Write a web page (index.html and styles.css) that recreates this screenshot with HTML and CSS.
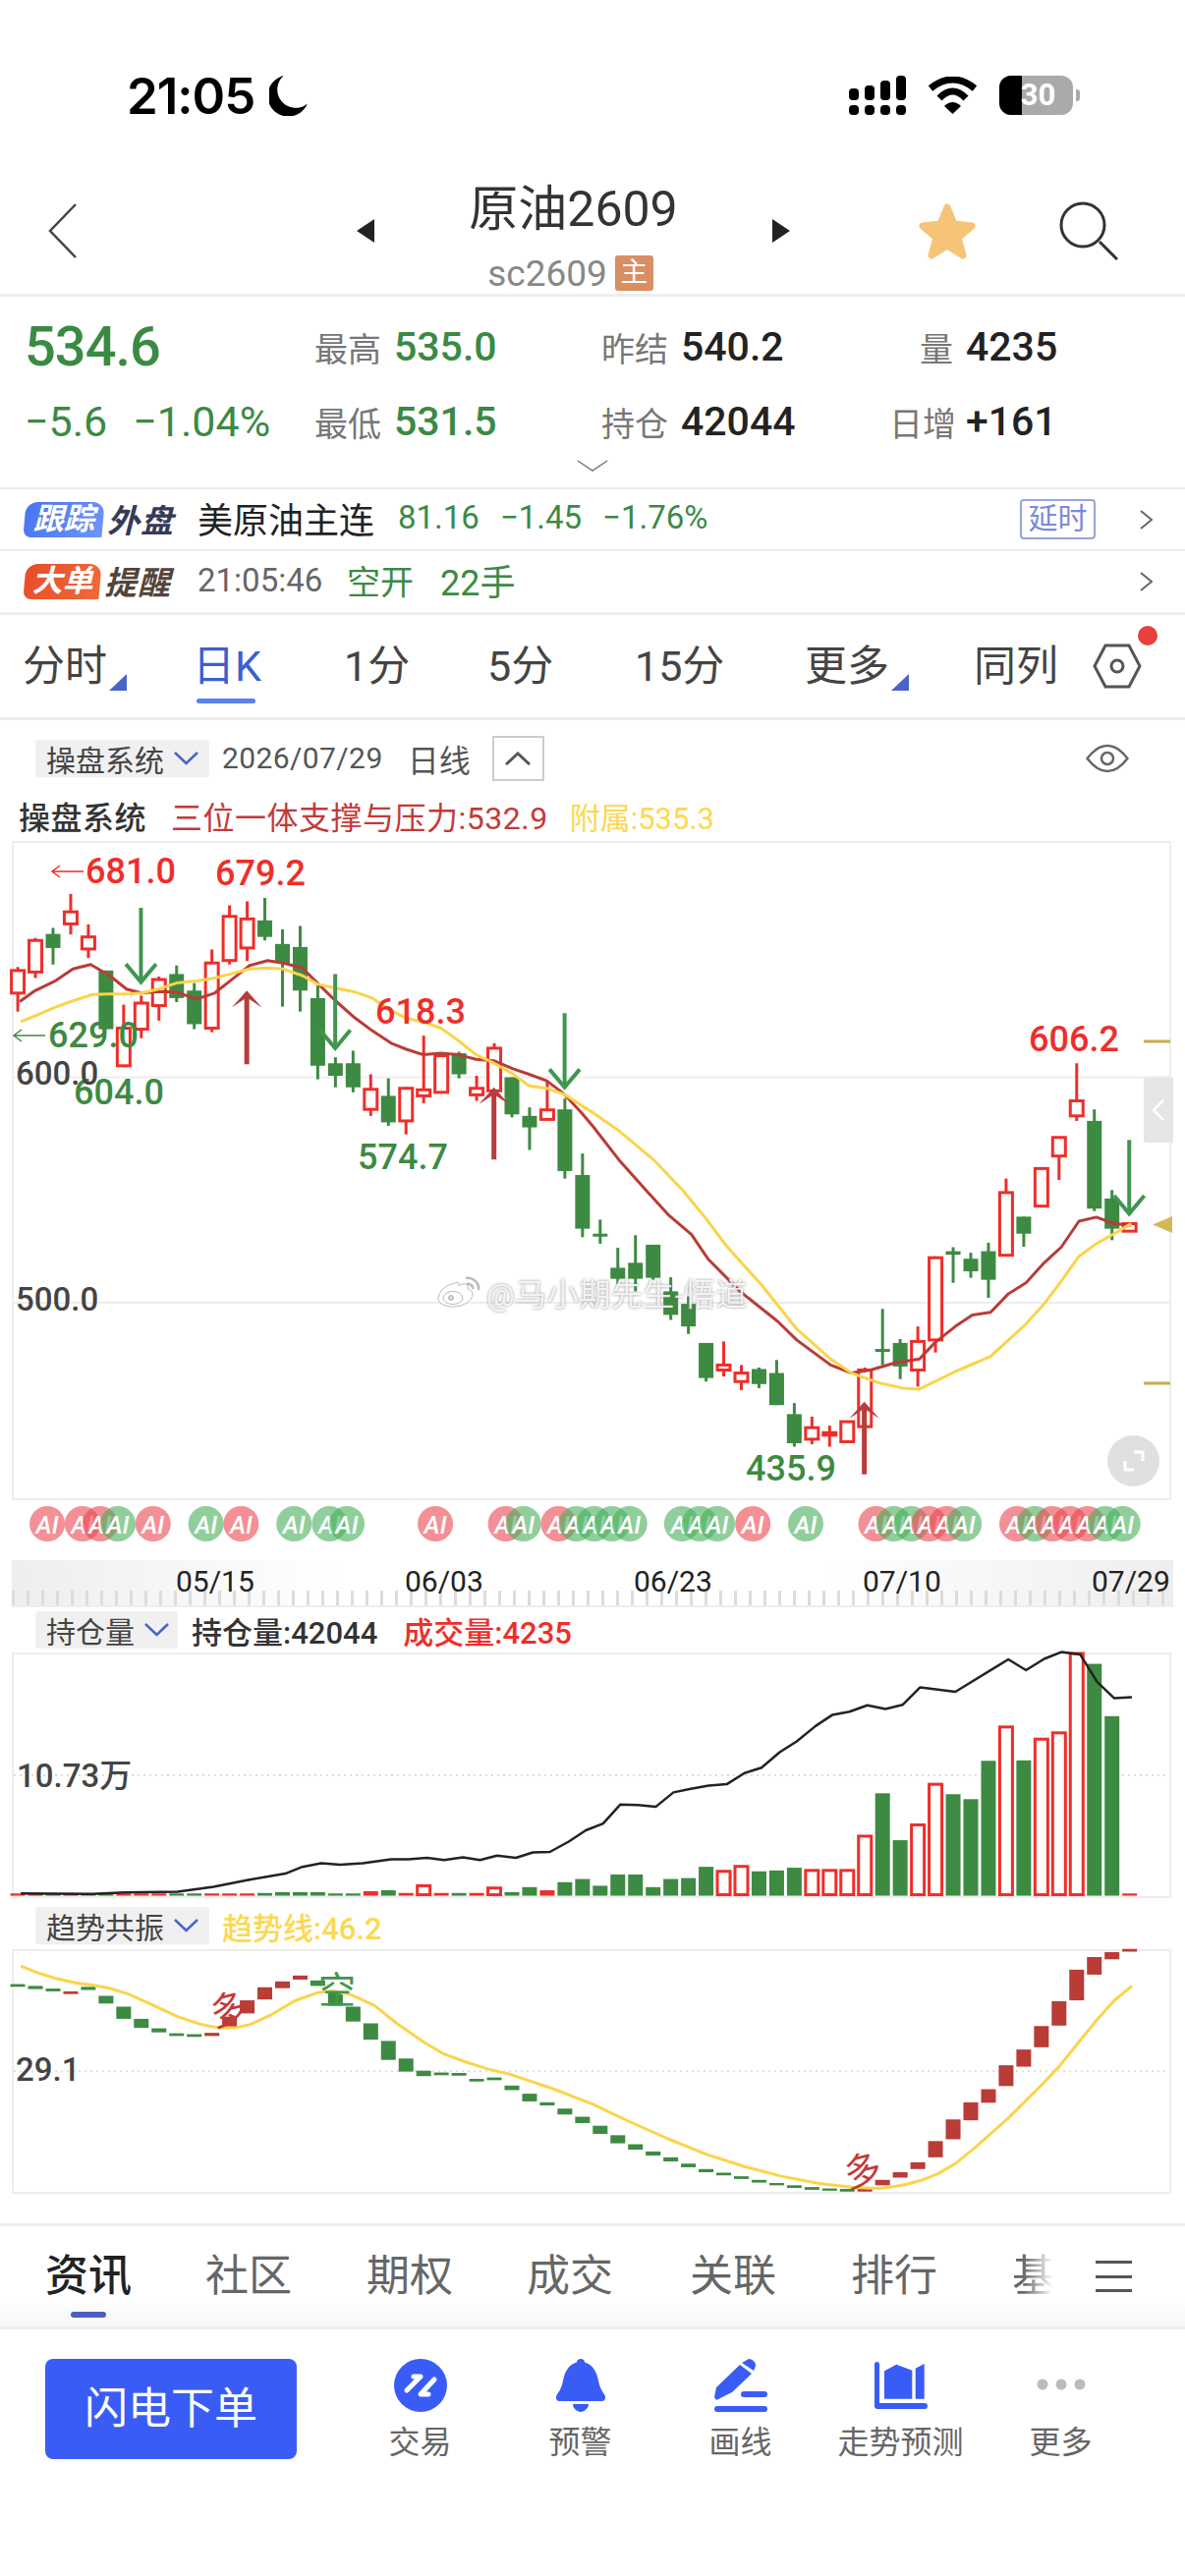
FILE: index.html
```html
<!DOCTYPE html>
<html lang="zh">
<head>
    <meta charset="UTF-8" />
    <title>原油2609</title>
    <link rel="stylesheet" href="styles.css">
</head>
<body>
<div class="status">
    <span class="clock">21:05</span>
    <svg class="moon" viewBox="0 0 38 40"><path d="M14 1A20 20 0 1 0 37 28 17 17 0 0 1 14 1z"/></svg>
    <svg class="signal" viewBox="0 0 58 40">
        <rect x="0" y="13" width="10" height="12" rx="4"/><rect x="0" y="30" width="10" height="10" rx="4"/>
        <rect x="16" y="10" width="10" height="15" rx="4"/><rect x="16" y="30" width="10" height="10" rx="4"/>
        <rect x="32" y="5" width="10" height="20" rx="4"/><rect x="32" y="30" width="10" height="10" rx="4"/>
        <rect x="48" y="0" width="10" height="25" rx="4"/><rect x="48" y="30" width="10" height="10" rx="4"/>
    </svg>
    <svg class="wifi" viewBox="0 0 51 38">
        <path d="M25.500 38 17 30Q25.500 22 34 30z"/>
        <path class="arc" d="M12 22Q25.500 8 39 22M3 12Q25.500-6 48 12"/>
    </svg>
    <div class="battery"><span class="battery-fill"></span><b>30</b></div>
    <span class="battery-nub"></span>
</div>

<div class="nav">
    <svg class="back" viewBox="0 0 30 56"><polyline points="28,1 2,28 28,55"/></svg>
    <span class="tri tri-left"></span>
    <div class="title-box">
        <div class="title">原油2609</div>
        <div class="subtitle">sc2609<span class="main-tag">主</span></div>
    </div>
    <span class="tri tri-right"></span>
    <svg class="star" viewBox="0 0 60 60"><path d="M30 6 37 23 55 25 41 37 46 55 30 45 14 55 19 37 5 25 23 23z"/></svg>
    <svg class="search" viewBox="0 0 60 60"><circle cx="24" cy="24" r="22"/><line x1="41" y1="41" x2="59" y2="59"/></svg>
</div>

<div class="quote">
    <div class="quote-grid">
        <div class="price">534.6</div>
        <div class="stat"><label>最高</label><span class="up">535.0</span></div>
        <div class="stat"><label>昨结</label><span>540.2</span></div>
        <div class="stat stat-end"><label>量</label><span>4235</span></div>
        <div class="change"><span>−5.6</span><span>−1.04%</span></div>
        <div class="stat"><label>最低</label><span class="up">531.5</span></div>
        <div class="stat"><label>持仓</label><span>42044</span></div>
        <div class="stat stat-end"><label>日增</label><span>+161</span></div>
    </div>
    <svg class="more-down" viewBox="0 0 32 12"><polyline points="1,1 16,11 31,1"/></svg>
</div>

<div class="info-row">
    <span class="badge badge-blue">跟踪</span><span class="badge-word word-navy">外盘</span>
    <span class="info-name">美原油主连</span>
    <span class="info-num">81.16</span><span class="info-num">−1.45</span><span class="info-num">−1.76%</span>
    <span class="delay">延时</span>
    <svg class="chev" viewBox="0 0 13 20"><polyline points="1,1 12,10 1,19"/></svg>
</div>
<div class="info-row info-row-end">
    <span class="badge badge-orange">大单</span><span class="badge-word word-brown">提醒</span>
    <span class="info-time">21:05:46</span>
    <span class="info-green">空开</span><span class="info-green info-hand">22手</span>
    <svg class="chev chev-auto" viewBox="0 0 13 20"><polyline points="1,1 12,10 1,19"/></svg>
</div>

<div class="tabs">
    <span class="tab tab-mark">分时</span>
    <span class="tab tab-on">日K</span>
    <span class="tab">1分</span>
    <span class="tab">5分</span>
    <span class="tab">15分</span>
    <span class="tab tab-mark">更多</span>
    <span class="tab">同列</span>
    <span class="hex-wrap">
        <svg class="hex" viewBox="0 0 50 46"><polygon points="13,2 37,2 48,23 37,44 13,44 2,23"/><circle cx="25" cy="23" r="6"/></svg>
        <i class="dot"></i>
    </span>
</div>

<div class="chart-head">
    <div class="chip chip-wide">操盘系统<svg class="chip-arrow" viewBox="0 0 25 14"><polyline points="1,1 12.500,12 24,1"/></svg></div>
    <span class="date">2026/07/29</span>
    <span class="period">日线</span>
    <span class="fold"><svg viewBox="0 0 26 14"><polyline points="1,13 13,2 25,13"/></svg></span>
    <svg class="eye" viewBox="0 0 44 30"><path d="M1.500 15C10 4 16 2 22 2s12 2 20.500 13C34 26 28 28 22 28S10 26 1.500 15z"/><circle cx="22" cy="15" r="6"/></svg>
</div>
<div class="legend">
    <span class="legend-name">操盘系统</span>
    <span class="legend-red">三位一体支撑与压力:532.9</span>
    <span class="legend-yellow">附属:535.3</span>
</div>

<div class="panel panel-main">
    <svg id="mainChart"></svg>
    <div class="watermark">
        <svg viewBox="0 0 44 32">
            <path d="M18 7C8 9 1 16 1 23c0 5 8 8 15 8 11 0 20-6 20-13 0-3-3-4-5-5 1-3 0-6-5-5-3 1-5 2-4 0 0-2-1-2-4-1z"/>
            <ellipse class="wm-hole" cx="16" cy="22" rx="10" ry="6.500"/>
            <circle class="wm-eye" cx="14" cy="22" r="2.500"/>
            <path class="wm-arc" d="M29 2c7-1 14 4 13 12M30 8c3-1 7 2 6 5"/>
        </svg>
        <span>@马小期先生-悟道</span>
    </div>
    <div class="side-tab"><svg viewBox="0 0 12 22"><polyline points="11,1 1,11 11,21"/></svg></div>
    <div class="zoom-btn"><svg viewBox="0 0 24 24"><path d="M12 3h9v9M12 21H3v-9"/></svg></div>
</div>

<svg id="aiRow" class="ai-row"></svg>

<div class="axis">
    <span>05/15</span><span>06/03</span><span>06/23</span><span>07/10</span><span>07/29</span>
</div>

<div class="sub-head sub-head-vol">
    <div class="chip chip-vol">持仓量<svg class="chip-arrow" viewBox="0 0 25 14"><polyline points="1,1 12.500,12 24,1"/></svg></div>
    <span class="vol-a">持仓量:42044</span>
    <span class="vol-b">成交量:4235</span>
</div>
<div class="panel panel-vol"><svg id="volChart"></svg></div>

<div class="sub-head sub-head-trend">
    <div class="chip chip-wide">趋势共振<svg class="chip-arrow" viewBox="0 0 25 14"><polyline points="1,1 12.500,12 24,1"/></svg></div>
    <span class="trend-val">趋势线:46.2</span>
</div>
<div class="panel panel-trend"><svg id="trendChart"></svg></div>

<div class="news-tabs">
    <span class="news-tab news-on">资讯</span>
    <span class="news-tab">社区</span>
    <span class="news-tab">期权</span>
    <span class="news-tab">成交</span>
    <span class="news-tab">关联</span>
    <span class="news-tab">排行</span>
    <span class="news-tab news-fade">基</span>
    <span class="menu"><i></i><i></i><i></i></span>
</div>

<div class="toolbar">
    <div class="order-btn">闪电下单</div>
    <div class="tool">
        <svg viewBox="0 0 54 54"><circle class="fill" cx="27" cy="27" r="27"/><path class="mark" d="M20 18H27L13 32M41 21 27 36H35"/></svg>
        <span>交易</span>
    </div>
    <div class="tool">
        <svg viewBox="0 0 50 54"><path class="fill" d="M25 0c2.500 0 4 1.500 4 3.500C37 6 41 12 43 22c1 6 3 10 6 14 2 3 1 7-2 7H3c-3 0-4-4-2-7 3-4 5-8 6-14C9 12 13 6 21 3.500 21 1.500 22.500 0 25 0zM17 46h16c0 4-4 8-8 8s-8-4-8-8z"/></svg>
        <span>预警</span>
    </div>
    <div class="tool">
        <svg viewBox="0 0 54 54"><path class="fill" d="M28 4 35 0c3 0 7 3 7 6 0 2-1 4-2 6zM26 6 38 15 18 34 2 42 0 39 2 29zM30 33H51a3 3 0 0 1 0 6H30a3 3 0 0 1 0-6zM3 48H51a3 3 0 0 1 0 6H3a3 3 0 0 1 0-6z"/></svg>
        <span>画线</span>
    </div>
    <div class="tool">
        <svg viewBox="0 0 54 54"><path class="fill" d="M0 5.500a2.500 2.500 0 0 1 5 0V45H51a3 3 0 0 1 0 6H3a3 3 0 0 1-3-3zM10 12.300 22.300 5.700 38.300 11.700V40.700H10zM41.700 9.700 50.700 5V40.700H41.700z"/></svg>
        <span>走势预测</span>
    </div>
    <div class="tool">
        <svg viewBox="0 0 54 54"><circle class="gray" cx="8" cy="26" r="5.500"/><circle class="gray" cx="27" cy="26" r="5.500"/><circle class="gray" cx="46" cy="26" r="5.500"/></svg>
        <span>更多</span>
    </div>
</div>

<script src="chart.js"></script>
</body>
</html>
```

FILE: styles.css
```css
* {
    box-sizing: border-box;
}

html, body {
    margin: 0;
    padding: 0;
    background: #fff;
}

body {
    width: 1206px;
    height: 2622px;
    overflow: hidden;
    font-family: Roboto, "Noto Sans CJK SC", sans-serif;
    color: #222;
}

/* status bar */
.status {
    height: 150px;
    padding: 63px 107px 0 129px;
    display: flex;
    align-items: flex-start;
}

.clock {
    font-family: Inter, sans-serif;
    font-weight: 600;
    font-size: 51px;
    line-height: 70px;
    letter-spacing: -1px;
    color: #000;
}

.moon {
    width: 40px;
    height: 42px;
    margin: 13px 0 0 15px;
    fill: #000;
}

.signal {
    width: 58px;
    height: 40px;
    margin: 14px 0 0 auto;
    fill: #000;
}

.wifi {
    width: 51px;
    height: 38px;
    margin: 15px 0 0 22px;
    fill: #000;
}

.wifi .arc {
    fill: none;
    stroke: #000;
    stroke-width: 7;
}

.battery {
    width: 75px;
    height: 40px;
    margin: 14px 0 0 22px;
    border-radius: 12px;
    background: #aaa;
    position: relative;
    overflow: hidden;
    text-align: center;
}

.battery-fill {
    position: absolute;
    left: 0;
    top: 0;
    bottom: 0;
    width: 23px;
    background: #000;
}

.battery b {
    position: relative;
    color: #fff;
    font-size: 31px;
    line-height: 40px;
    margin-left: 4px;
}

.battery-nub {
    width: 4px;
    height: 12px;
    margin: 28px 0 0 3px;
    border-radius: 0 3px 3px 0;
    background: #aaa;
}

/* top nav */
.nav {
    height: 152px;
    display: flex;
    align-items: flex-start;
    border-bottom: 3px solid #eee;
}

.back {
    width: 30px;
    height: 56px;
    margin: 57px 0 0 49px;
    fill: none;
    stroke: #444;
    stroke-width: 2.500;
}

.tri {
    width: 0;
    height: 0;
    margin-top: 73px;
    border-top: 12px solid transparent;
    border-bottom: 12px solid transparent;
}

.tri-left {
    margin-left: 284px;
    border-right: 18px solid #222;
}

.tri-right {
    border-left: 18px solid #222;
}

.title-box {
    width: 405px;
    text-align: center;
}

.title {
    font-size: 50px;
    line-height: 70px;
    margin-top: 28px;
    color: #333;
}

.subtitle {
    height: 36px;
    margin-top: 12px;
    display: flex;
    justify-content: center;
    align-items: center;
    font-size: 37px;
    color: #888;
    padding-right: 6px;
}

.main-tag {
    width: 39px;
    height: 36px;
    margin-left: 8px;
    background: #d98e64;
    border-radius: 3px;
    color: #fff;
    font-size: 28px;
    line-height: 36px;
}

.star {
    width: 60px;
    height: 60px;
    margin: 55px 0 0 130px;
    fill: #f6c477;
    stroke: #f6c477;
    stroke-width: 7;
    stroke-linejoin: round;
}

.search {
    width: 60px;
    height: 60px;
    margin: 55px 0 0 84px;
    fill: none;
    stroke: #333;
    stroke-width: 3;
}

/* quote block */
.quote {
    height: 196px;
    padding: 13px 0 0 25px;
    border-bottom: 2px solid #eee;
    position: relative;
}

.quote-grid {
    display: grid;
    grid-template-columns: 295px 292px 296px 1fr;
    grid-auto-rows: 76px;
    align-items: center;
}

.price {
    font-size: 56px;
    font-weight: 500;
    color: #3b8a44;
    letter-spacing: -1px;
}

.change {
    display: flex;
    gap: 26px;
    font-size: 43px;
    color: #3b8a44;
}

.stat {
    display: flex;
    align-items: center;
    gap: 13px;
    font-size: 41px;
    font-weight: 500;
}

.stat label {
    width: 68px;
    font-size: 34px;
    font-weight: 400;
    color: #777;
    text-align: right;
    white-space: nowrap;
}

.stat-end label {
    width: 65px;
    margin-left: -3px;
}

.up {
    color: #3b8a44;
}

.more-down {
    position: absolute;
    left: 587px;
    top: 166px;
    width: 32px;
    height: 12px;
    fill: none;
    stroke: #777;
    stroke-width: 1.500;
}

/* follow and alert rows */
.info-row {
    height: 63px;
    padding-left: 25px;
    display: flex;
    align-items: center;
    border-bottom: 2px solid #eee;
}

.info-row-end {
    height: 65px;
    border-bottom-width: 3px;
}

.badge {
    width: 80px;
    height: 36px;
    position: relative;
    z-index: 0;
    color: #fff;
    font-size: 31px;
    font-style: italic;
    font-weight: 700;
    line-height: 36px;
    text-align: center;
}

.badge::before {
    content: "";
    position: absolute;
    z-index: -1;
    left: 0;
    right: 0;
    top: 0;
    bottom: 0;
    border-radius: 12px 12px 0 8px;
    transform: skewX(-5deg);
}

.badge-blue::before {
    background: linear-gradient(110deg, #4a74f0, #6c94f8);
}

.badge-orange {
    width: 77px;
}

.badge-orange::before {
    background: linear-gradient(110deg, #e84c28, #ef6a3c);
}

.badge-word {
    width: 76px;
    margin-left: 4px;
    padding-bottom: 2px;
    font-size: 33px;
    font-style: italic;
    font-weight: 700;
    letter-spacing: 1px;
    white-space: nowrap;
}

.word-navy {
    color: #353a58;
}

.word-brown {
    color: #54443a;
}

.info-name {
    width: 204px;
    margin-left: 16px;
    padding-bottom: 4px;
    font-size: 36px;
    color: #222;
}

.info-num {
    margin-right: 21px;
    padding-bottom: 4px;
    font-size: 33px;
    color: #3b8a44;
}

.delay {
    width: 77px;
    height: 41px;
    margin-left: auto;
    border: 2px solid #98a3e0;
    border-radius: 4px;
    color: #7a8ad8;
    font-size: 30px;
    line-height: 36px;
    text-align: center;
}

.chev {
    width: 13px;
    height: 20px;
    margin: 0 33px 0 45px;
    fill: none;
    stroke: #666;
    stroke-width: 2;
}

.chev-auto {
    margin-left: auto;
}

.info-time {
    width: 152px;
    margin-left: 19px;
    padding-bottom: 4px;
    font-size: 33px;
    color: #666;
}

.info-green {
    margin-right: 25px;
    padding-bottom: 4px;
    font-size: 34px;
    color: #3b8a44;
}

.info-hand {
    margin-left: 2px;
    font-size: 36px;
}

/* period tabs */
.tabs {
    height: 107px;
    padding-left: 23px;
    display: grid;
    grid-template-columns: 173px 154px 146px 150px 173px 172px 121px 60px;
    align-items: center;
    border-bottom: 3px solid #eee;
    font-size: 43px;
    color: #444;
}

.tab {
    position: relative;
    line-height: 104px;
}

.tab-mark::after {
    content: "";
    position: absolute;
    left: 88px;
    top: 60px;
    border-left: 18px solid transparent;
    border-bottom: 17px solid #4a63c8;
}

.tab-on {
    color: #3d5fd0;
}

.tab-on::after {
    content: "";
    position: absolute;
    left: 4px;
    top: 85px;
    width: 60px;
    height: 5px;
    border-radius: 3px;
    background: #5b80ee;
}

.hex-wrap {
    position: relative;
    height: 46px;
}

.hex {
    width: 50px;
    height: 46px;
    display: block;
    fill: none;
    stroke: #555;
    stroke-width: 3;
}

.dot {
    position: absolute;
    left: 46px;
    top: -18px;
    width: 20px;
    height: 20px;
    border-radius: 50%;
    background: #e8403c;
}

/* chart headers */
.chart-head {
    height: 77px;
    padding: 0 57px 0 36px;
    display: flex;
    align-items: center;
    font-size: 32px;
}

.chip {
    height: 38px;
    padding-left: 11px;
    display: flex;
    align-items: center;
    background: #f0f0f0;
    border-radius: 3px;
    font-size: 30px;
    color: #444;
    white-space: nowrap;
}

.chip-wide {
    width: 177px;
}

.chip-vol {
    width: 145px;
}

.chip-arrow {
    width: 25px;
    height: 14px;
    margin-left: 10px;
    fill: none;
    stroke: #4a63c8;
    stroke-width: 2.500;
}

.date {
    margin-left: 13px;
    font-size: 30px;
    letter-spacing: 0.4px;
    color: #555;
}

.period {
    margin-left: 25px;
    color: #555;
}

.fold {
    width: 53px;
    height: 46px;
    margin-left: 22px;
    border: 2px solid #ccc;
    display: flex;
    align-items: center;
    justify-content: center;
}

.fold svg {
    width: 26px;
    height: 14px;
    fill: none;
    stroke: #555;
    stroke-width: 3;
}

.eye {
    width: 44px;
    height: 30px;
    margin-left: auto;
    fill: none;
    stroke: #666;
    stroke-width: 2.500;
}

.legend {
    height: 46px;
    padding: 0 0 6px 19px;
    display: flex;
    align-items: center;
    font-size: 32px;
    white-space: nowrap;
}

.legend-name {
    color: #333;
    font-weight: 500;
    letter-spacing: 0.5px;
}

.legend-red {
    margin-left: 25px;
    color: #c23a3a;
    letter-spacing: 0.5px;
}

.legend-yellow {
    margin-left: 22px;
    font-size: 31px;
    color: #fcd850;
}

/* chart panels */
.panel {
    width: 1180px;
    margin-left: 12px;
    border: 2px solid #eee;
    position: relative;
}

.panel > svg {
    display: block;
    width: 100%;
    height: 100%;
    overflow: visible;
}

.panel-main {
    height: 671px;
}

.panel-vol {
    height: 250px;
}

.panel-trend {
    height: 249px;
}

.watermark {
    position: absolute;
    left: 431px;
    top: 434px;
    display: flex;
    align-items: center;
    gap: 6px;
    font-size: 32px;
    letter-spacing: 0.5px;
    color: rgba(255, 255, 255, 0.85);
    text-shadow: 0 0 3px rgba(110, 110, 110, 0.8);
    white-space: nowrap;
}

.watermark svg {
    width: 44px;
    height: 36px;
    fill: rgba(255, 255, 255, 0.85);
    stroke: rgba(140, 140, 140, 0.6);
    stroke-width: 1;
}

.wm-hole {
    fill: rgba(255, 255, 255, 0.9);
}

.wm-eye {
    fill: rgba(200, 200, 200, 0.7);
}

.wm-arc {
    fill: none;
    stroke-width: 2.500;
}

.side-tab {
    position: absolute;
    left: 1150px;
    top: 239px;
    width: 30px;
    height: 66px;
    background: #e6e6e6;
    border-radius: 3px 0 0 3px;
    display: flex;
    align-items: center;
    justify-content: center;
}

.side-tab svg {
    width: 12px;
    height: 22px;
    fill: none;
    stroke: #fff;
    stroke-width: 2.500;
}

.zoom-btn {
    position: absolute;
    left: 1113px;
    top: 603px;
    width: 53px;
    height: 52px;
    border-radius: 50%;
    background: #e0e0e0;
    display: flex;
    align-items: center;
    justify-content: center;
}

.zoom-btn svg {
    width: 24px;
    height: 24px;
    fill: none;
    stroke: #fff;
    stroke-width: 3;
}

.ai-row {
    display: block;
    width: 1206px;
    height: 61px;
}

.axis {
    width: 1182px;
    height: 48px;
    margin-left: 12px;
    padding: 4px 0 0 167px;
    display: flex;
    gap: 153px;
    font-size: 30px;
    line-height: 36px;
    color: #222;
    white-space: nowrap;
    background:
        repeating-linear-gradient(90deg, #dcdcdc 0 3px, transparent 3px 15px) 0 31px / 100% 16px no-repeat,
        linear-gradient(90deg, #eee, #fff 28%, #fff 70%, #eee);
    border-bottom: 2px solid #eee;
}

.axis span {
    width: 80px;
}

.sub-head {
    padding-left: 36px;
    display: flex;
    align-items: center;
    font-size: 31px;
    white-space: nowrap;
}

.sub-head-vol {
    height: 46px;
}

.sub-head-trend {
    height: 52px;
    padding-top: 4px;
}

.vol-a {
    margin-left: 14px;
    color: #333;
    font-weight: 500;
}

.vol-b {
    margin-left: 26px;
    color: #ee2e2a;
    font-weight: 500;
}

.trend-val {
    margin-left: 13px;
    color: #fcd850;
    font-weight: 500;
}

/* news tabs */
.news-tabs {
    height: 108px;
    margin-top: 30px;
    padding-left: 46px;
    display: grid;
    grid-template-columns: 163px 164px 163px 166px 164px 164px 85px 40px;
    align-items: center;
    border-top: 3px solid #eee;
    border-bottom: 3px solid #eee;
    background: linear-gradient(#fff 70%, #f6f6f6);
    font-size: 44px;
    color: #666;
}

.news-tab {
    position: relative;
    line-height: 102px;
    white-space: nowrap;
}

.news-on {
    color: #222;
    font-weight: 500;
}

.news-on::after {
    content: "";
    position: absolute;
    left: 26px;
    top: 87px;
    width: 36px;
    height: 6px;
    border-radius: 3px;
    background: #4a5fc0;
}

.news-fade {
    justify-self: start;
    -webkit-mask-image: linear-gradient(90deg, #000 25%, transparent 95%);
    mask-image: linear-gradient(90deg, #000 25%, transparent 95%);
}

.menu {
    height: 32px;
    width: 37px;
    display: flex;
    flex-direction: column;
    justify-content: space-between;
}

.menu i {
    height: 3px;
    background: #555;
}

/* bottom toolbar */
.toolbar {
    padding: 30px 0 0 46px;
    display: flex;
    align-items: flex-start;
}

.order-btn {
    width: 256px;
    height: 102px;
    margin-right: 44px;
    border-radius: 8px;
    background: #3a5cf6;
    color: #fff;
    font-size: 44px;
    line-height: 102px;
    text-align: center;
}

.tool {
    width: 163px;
    display: flex;
    flex-direction: column;
    align-items: center;
    gap: 11px;
    font-size: 32px;
    line-height: 40px;
    color: #666;
}

.tool svg {
    height: 54px;
    width: 54px;
}

.tool .fill {
    fill: #3a5cf6;
}

.tool .mark {
    fill: none;
    stroke: #fff;
    stroke-width: 5;
    stroke-linecap: round;
    stroke-linejoin: round;
}

.tool .gray {
    fill: #bbb;
}
```

FILE: chart.js
```js
// price data below was read off a chart image, so the values stay in sample units
const NS = "http://www.w3.org/2000/svg";
const RED = "#ee2e2a", GREEN = "#3d8a42", DARKRED = "#b93c36";

function add(svg, tag, attrs, text) {
    const n = document.createElementNS(NS, tag);
    for (const k in attrs) n.setAttribute(k, attrs[k]);
    if (text) n.textContent = text;
    svg.appendChild(n);
    return n;
}

const sx = v => v / 2.6 - 14;
const barX = i => sx(47 + 46.7 * i);

function line(svg, pts, color, toY, width) {
    const d = pts.map(p => sx(p[0]).toFixed(1) + "," + toY(p[1]).toFixed(1)).join(" ");
    add(svg, "polyline", { points: d, fill: "none", stroke: color, "stroke-width": width || 3, "stroke-linejoin": "round" });
}

function label(svg, x, y, txt, color, size) {
    add(svg, "text", { x: x, y: y, fill: color, "font-size": size || 36, "font-weight": 500, "dominant-baseline": "central" }, txt);
}

/* ---------- main chart ---------- */
const main = document.getElementById("mainChart");
const my = v => v / 1.96 - 138;

add(main, "line", { x1: 0, x2: 1176, y1: 238.5, y2: 238.5, stroke: "#eee", "stroke-width": 2 });
add(main, "line", { x1: 0, x2: 1176, y1: 468, y2: 468, stroke: "#eee", "stroke-width": 2 });

// hi, top, bottom, lo, r=hollow red g=solid green
const candles = [
    [518,525,570,607,"r"],[460,465,528,540,"r"],[440,452,480,513,"g"],[372,408,432,453,"r"],
    [433,458,482,500,"r"],[525,525,642,642,"g"],[593,640,715,718,"r"],[575,590,642,660,"r"],
    [537,543,595,625,"r"],[515,532,580,588,"g"],[550,565,632,642,"g"],[483,510,640,648,"r"],
    [395,417,505,513,"r"],[387,422,480,506,"r"],[380,425,458,465,"g"],[443,472,510,597,"g"],
    [436,478,565,607,"g"],[555,580,715,742,"g"],[698,710,735,758,"g"],[685,710,758,768,"g"],
    [732,762,802,815,"r"],[740,775,828,835,"g"],[757,760,825,852,"r"],[655,763,775,790,"r"],
    [690,695,768,770,"r"],[687,690,732,740,"g"],[735,760,773,785,"r"],[670,680,765,770,"r"],
    [738,738,812,818,"g"],[798,815,838,883,"g"],[745,803,822,822,"r"],[780,802,925,940,"g"],
    [890,933,1040,1057,"g"],[1022,1050,1055,1070,"g"],[1078,1118,1140,1150,"g"],[1053,1108,1140,1165,"g"],
    [1072,1072,1138,1142,"g"],[1137,1165,1212,1222,"g"],[1175,1190,1235,1250,"g"],[1268,1268,1338,1345,"g"],
    [1265,1312,1322,1335,"r"],[1312,1328,1345,1362,"r"],[1317,1320,1350,1358,"g"],[1302,1328,1392,1392,"g"],
    [1388,1410,1468,1475,"g"],[1415,1437,1460,1470,"r"],[1433,1447,1452,1475,"r"],[1425,1425,1465,1465,"r"],
    [1317,1322,1435,1435,"r"],[1200,1280,1285,1312,"g"],[1260,1268,1315,1340,"g"],[1235,1265,1322,1355,"r"],
    [1095,1098,1262,1287,"r"],[1077,1085,1092,1148,"g"],[1088,1100,1125,1138,"g"],[1068,1085,1142,1178,"g"],
    [940,968,1093,1093,"r"],[1016,1016,1050,1076,"g"],[920,920,995,997,"r"],[858,858,895,943,"r"],
    [710,785,815,825,"r"],[802,825,1000,1005,"g"],[963,980,1040,1063,"g"],[1030,1030,1045,1046,"r"]
];

candles.forEach((c, i) => {
    const x = barX(i), color = c[4] == "r" ? RED : GREEN;
    add(main, "line", { x1: x, x2: x, y1: my(c[0]), y2: my(c[3]), stroke: color, "stroke-width": 3 });
    if (c[4] == "r") {
        add(main, "rect", { x: x - 6.5, y: my(c[1]), width: 13, height: my(c[2]) - my(c[1]), fill: "#fff", stroke: RED, "stroke-width": 3 });
    } else {
        add(main, "rect", { x: x - 7.5, y: my(c[1]), width: 15, height: Math.max(my(c[2]) - my(c[1]), 3), fill: GREEN });
    }
});

const redMa = [[52,587],[93,565],[148,545],[193,522],[240,513],[290,535],[335,562],[373,570],[420,567],[467,568],[520,582],[568,570],[610,545],[660,515],[708,505],[750,510],[800,520],[840,550],[887,585],[940,620],[985,645],[1035,670],[1075,682],[1120,693],[1167,690],[1213,693],[1260,702],[1307,705],[1354,720],[1400,732],[1447,745],[1494,772],[1540,810],[1568,835],[1638,903],[1703,958],[1768,1012],[1830,1052],[1873,1100],[1958,1165],[2058,1225],[2108,1262],[2198,1312],[2253,1328],[2303,1322],[2368,1308],[2433,1300],[2473,1268],[2528,1235],[2573,1212],[2621,1207],[2668,1170],[2715,1148],[2763,1108],[2808,1077],[2855,1025],[2901,1017],[2948,1030],[2993,1033]];
const yellowMa = [[55,627],[100,613],[150,597],[195,585],[245,573],[290,572],[340,572],[373,570],[420,562],[467,550],[520,546],[568,540],[610,532],[660,522],[708,520],[750,522],[800,535],[840,552],[887,560],[940,568],[985,580],[1035,605],[1075,620],[1120,628],[1167,640],[1213,665],[1260,693],[1307,710],[1354,730],[1400,755],[1447,760],[1494,772],[1540,795],[1568,808],[1638,845],[1733,905],[1808,965],[1868,1020],[1923,1075],[2018,1155],[2108,1240],[2198,1300],[2253,1328],[2328,1348],[2388,1358],[2433,1360],[2528,1325],[2621,1295],[2715,1230],[2763,1190],[2808,1145],[2855,1095],[2901,1070],[2948,1050],[2993,1030]];
line(main, redMa, DARKRED, my);
line(main, yellowMa, "#fad44a", my);

// signal arrows
function arrowDown(x, from, to) {
    const g = "#3f9650";
    add(main, "line", { x1: sx(x), x2: sx(x), y1: my(from), y2: my(to), stroke: g, "stroke-width": 4 });
    add(main, "polyline", { points: `${sx(x - 40)},${my(to - 36)} ${sx(x)},${my(to)} ${sx(x + 40)},${my(to - 36)}`, fill: "none", stroke: g, "stroke-width": 4 });
}
function arrowUp(x, from, to) {
    const r = "#b93c3c";
    add(main, "line", { x1: sx(x), x2: sx(x), y1: my(from), y2: my(to + 10), stroke: r, "stroke-width": 5 });
    add(main, "polygon", { points: `${sx(x - 40)},${my(to + 34)} ${sx(x)},${my(to)} ${sx(x + 40)},${my(to + 34)} ${sx(x)},${my(to + 14)}`, fill: r });
}
arrowDown(373, 400, 548);
arrowDown(887, 532, 680);
arrowDown(1494, 610, 758);
arrowDown(2988, 863, 1010);
arrowUp(653, 712, 565);
arrowUp(1307, 902, 758);
arrowUp(2287, 1530, 1385);

// price labels, x is px inside the panel
label(main, 73, 29, "681.0", RED);
label(main, 205, 31, "679.2", RED);
label(main, 35, 196, "629.0", GREEN);
label(main, 61, 254, "604.0", GREEN);
label(main, 368, 172, "618.3", RED);
label(main, 350, 320, "574.7", GREEN);
label(main, 1033, 200, "606.2", RED);
label(main, 745, 637, "435.9", GREEN);
label(main, 2, 234, "600.0", "#444", 33);
label(main, 2, 464, "500.0", "#444", 33);

add(main, "path", { d: "M39 29H71M47 23 39 29 47 35", fill: "none", stroke: RED, "stroke-width": 1.5 });
add(main, "path", { d: "M0 196H32M8 190 0 196 8 202", fill: "none", stroke: GREEN, "stroke-width": 1.5 });

// gold ticks and current price marker
add(main, "line", { x1: 1150, x2: 1177, y1: 202, y2: 202, stroke: "#c9ab4b", "stroke-width": 3 });
add(main, "line", { x1: 1150, x2: 1177, y1: 550, y2: 550, stroke: "#c9ab4b", "stroke-width": 3 });
add(main, "polygon", { points: "1159,388.5 1179,380 1179,397", fill: "#d4b856" });

/* ---------- AI badges ---------- */
const ai = document.getElementById("aiRow");
const aiBadges = [
    [125,"r"],[218,"r"],[265,"r"],[312,"g"],[405,"r"],[545,"g"],[638,"r"],[778,"g"],[872,"g"],[918,"g"],
    [1152,"r"],[1338,"r"],[1385,"g"],[1478,"r"],[1525,"g"],[1572,"g"],[1619,"g"],[1666,"g"],
    [1804,"g"],[1851,"g"],[1898,"g"],[1992,"r"],[2132,"g"],[2318,"r"],[2365,"g"],[2411,"g"],
    [2458,"r"],[2505,"r"],[2551,"g"],[2691,"r"],[2738,"g"],[2785,"r"],[2831,"r"],[2878,"r"],[2925,"g"],[2971,"g"]
];
aiBadges.forEach(b => {
    const x = b[0] / 2.6;
    add(ai, "ellipse", { cx: x, cy: 24, rx: 18, ry: 18, fill: b[1] == "r" ? "rgba(235,70,80,.6)" : "rgba(70,175,90,.6)" });
    add(ai, "text", { x: x, y: 25, fill: "#fff", "font-size": 25, "font-style": "italic", "font-weight": 500, "text-anchor": "middle", "dominant-baseline": "central" }, "AI");
});

/* ---------- volume panel ---------- */
const vol = document.getElementById("volChart");
const vy = v => v / 2.178 - 164;

add(vol, "line", { x1: 0, x2: 1176, y1: vy(625), y2: vy(625), stroke: "#ddd", "stroke-width": 2, "stroke-dasharray": "2 4" });

const volTops = [887,887,887,887,887,887,887,887,887,887,887,887,887,887,886,884,884,884,887,887,882,880,886,870,886,886,886,875,884,873,880,862,855,870,845,845,873,855,853,828,838,827,838,836,830,836,836,836,760,665,769,735,645,667,678,593,518,592,545,531,355,378,494,887];
volTops.forEach((top, i) => {
    const x = barX(i), y = vy(top), bot = vy(892), kind = candles[i][4];
    if (kind == "r" && bot - y > 6) {
        add(vol, "rect", { x: x - 6.5, y: y, width: 13, height: bot - y - 1, fill: "#fff", stroke: RED, "stroke-width": 3 });
    } else {
        add(vol, "rect", { x: x - 7.5, y: y, width: 15, height: bot - y, fill: kind == "r" ? RED : GREEN });
    }
});

const oi = [[55,887],[245,888],[330,885],[470,883],[565,872],[650,858],[755,843],[800,828],[850,820],[900,823],[960,820],[1035,811],[1080,811],[1130,808],[1175,813],[1225,807],[1270,813],[1315,803],[1365,808],[1410,796],[1455,795],[1505,772],[1550,747],[1596,732],[1641,690],[1688,691],[1735,695],[1782,663],[1828,655],[1875,648],[1923,645],[1970,620],[2015,608],[2063,574],[2108,550],[2158,516],[2203,491],[2248,484],[2295,470],[2343,478],[2388,469],[2435,430],[2528,440],[2668,368],[2715,392],[2763,367],[2808,352],[2858,357],[2903,418],[2948,454],[2995,452]];
line(vol, oi, "#222", vy, 2.5);
label(vol, 3, 123, "10.73万", "#444", 33);

/* ---------- trend panel ---------- */
const trend = document.getElementById("trendChart");
const ty = v => v / 2.178 - 466;

add(trend, "line", { x1: 0, x2: 1176, y1: ty(1281), y2: ty(1281), stroke: "#ddd", "stroke-width": 2, "stroke-dasharray": "2 4" });

const blocks = [
    [1088,1094,"g"],[1092,1099,"g"],[1098,1104,"g"],[1104,1110,"r"],[1094,1101,"g"],[1114,1131,"g"],[1138,1165,"g"],[1165,1185,"g"],
    [1186,1195,"g"],[1197,1203,"g"],[1199,1205,"g"],[1196,1203,"r"],[1160,1183,"r"],[1124,1153,"r"],[1095,1122,"r"],[1082,1097,"r"],
    [1069,1078,"r"],[1080,1092,"g"],[1108,1136,"g"],[1138,1171,"g"],[1175,1211,"g"],[1214,1256,"g"],[1253,1282,"g"],[1280,1292,"g"],
    [1284,1290,"g"],[1285,1291,"g"],[1298,1304,"g"],[1295,1301,"g"],[1313,1323,"g"],[1331,1348,"g"],[1350,1357,"g"],[1364,1377,"g"],
    [1382,1396,"g"],[1402,1420,"g"],[1423,1441,"g"],[1443,1455,"g"],[1459,1468,"g"],[1472,1481,"g"],[1486,1494,"g"],[1498,1505,"g"],
    [1506,1512,"g"],[1514,1520,"g"],[1522,1528,"g"],[1529,1534,"g"],[1534,1540,"g"],[1538,1544,"g"],[1541,1546,"g"],[1542,1548,"g"],
    [1542,1548,"r"],[1522,1534,"r"],[1505,1517,"r"],[1483,1498,"r"],[1436,1472,"r"],[1388,1432,"r"],[1350,1390,"r"],[1321,1351,"r"],
    [1268,1314,"r"],[1233,1271,"r"],[1181,1228,"r"],[1126,1180,"r"],[1056,1124,"r"],[1028,1067,"r"],[1017,1033,"r"],[1010,1016,"r"]
];
blocks.forEach((b, i) => {
    add(trend, "rect", { x: barX(i) - 7.5, y: ty(b[0]), width: 15, height: ty(b[1]) - ty(b[0]), fill: b[2] == "r" ? DARKRED : GREEN });
});

const trendLine = [[55,1048],[100,1063],[150,1076],[200,1085],[245,1090],[290,1097],[340,1110],[400,1133],[470,1160],[530,1177],[580,1185],[620,1185],[660,1178],[720,1155],[780,1125],[840,1107],[880,1103],[930,1112],[990,1135],[1050,1175],[1120,1216],[1175,1243],[1230,1260],[1290,1276],[1350,1288],[1400,1302],[1470,1322],[1530,1342],[1568,1354],[1668,1394],[1768,1431],[1868,1465],[1968,1492],[2068,1514],[2168,1530],[2258,1539],[2328,1541],[2388,1534],[2438,1523],[2483,1508],[2528,1486],[2578,1452],[2668,1385],[2758,1310],[2803,1270],[2853,1218],[2903,1167],[2948,1125],[2995,1092]];
line(trend, trendLine, "#fad44a", ty);

label(trend, 2, 120, "29.1", "#444", 33);

function mark(x, y, txt, color, angle) {
    add(trend, "text", { x: x, y: y, fill: color, "font-size": 38, "text-anchor": "middle", "dominant-baseline": "central", transform: `rotate(${angle} ${x} ${y})` }, txt);
}
mark(219, 60, "多", "#c23a3a", -15);
mark(329, 40, "空", "#3f9650", 0);
mark(864, 224, "多", "#c23a3a", -15);
```
